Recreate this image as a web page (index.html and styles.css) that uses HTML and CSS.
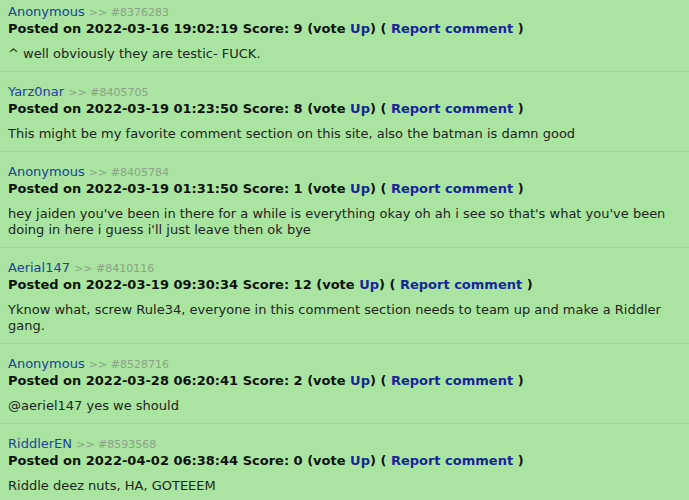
FILE: index.html
```html
<!DOCTYPE html>
<html lang="en">
<head>
    <meta charset="UTF-8">
    <title>Comments</title>
    <link rel="stylesheet" href="styles.css">
</head>
<body>
    <div class="comments">
        <div class="comment">
            <div class="author"><a href="#">Anonymous</a> <span class="cid">&gt;&gt; #8376283</span></div>
            <div class="meta">Posted on 2022-03-16 19:02:19 Score: 9 (vote <a href="#">Up</a>) ( <a href="#">Report comment</a> )</div>
            <p class="body">^ well obviously they are testic- FUCK.</p>
        </div>
        <div class="comment">
            <div class="author"><a href="#">Yarz0nar</a> <span class="cid">&gt;&gt; #8405705</span></div>
            <div class="meta">Posted on 2022-03-19 01:23:50 Score: 8 (vote <a href="#">Up</a>) ( <a href="#">Report comment</a> )</div>
            <p class="body">This might be my favorite comment section on this site, also the batman is damn good</p>
        </div>
        <div class="comment">
            <div class="author"><a href="#">Anonymous</a> <span class="cid">&gt;&gt; #8405784</span></div>
            <div class="meta">Posted on 2022-03-19 01:31:50 Score: 1 (vote <a href="#">Up</a>) ( <a href="#">Report comment</a> )</div>
            <p class="body">hey jaiden you've been in there for a while is everything okay oh ah i see so that's what you've been doing in here i guess i'll just leave then ok bye</p>
        </div>
        <div class="comment">
            <div class="author"><a href="#">Aerial147</a> <span class="cid">&gt;&gt; #8410116</span></div>
            <div class="meta">Posted on 2022-03-19 09:30:34 Score: 12 (vote <a href="#">Up</a>) ( <a href="#">Report comment</a> )</div>
            <p class="body">Yknow what, screw Rule34, everyone in this comment section needs to team up and make a Riddler gang.</p>
        </div>
        <div class="comment">
            <div class="author"><a href="#">Anonymous</a> <span class="cid">&gt;&gt; #8528716</span></div>
            <div class="meta">Posted on 2022-03-28 06:20:41 Score: 2 (vote <a href="#">Up</a>) ( <a href="#">Report comment</a> )</div>
            <p class="body">@aeriel147 yes we should</p>
        </div>
        <div class="comment">
            <div class="author"><a href="#">RiddlerEN</a> <span class="cid">&gt;&gt; #8593568</span></div>
            <div class="meta">Posted on 2022-04-02 06:38:44 Score: 0 (vote <a href="#">Up</a>) ( <a href="#">Report comment</a> )</div>
            <p class="body">Riddle deez nuts, HA, GOTEEEM</p>
        </div>
    </div>
</body>
</html>
```

FILE: styles.css
```css
body {
    margin: 0;
    background-color: #a9e5a0;
    color: #1f241e;
    font-family: 'DejaVu Sans', Verdana, sans-serif;
    font-size: 13px;
    line-height: 16px;
}

a {
    text-decoration: none;
}

.comment {
    padding: 12px 8px 9px 8px;
    border-bottom: 1px solid #9bd793;
}

.comment:first-child {
    padding-top: 4px;
}

.author a {
    color: #23409c;
}

.cid {
    color: #909e8c;
    font-size: 11px;
}

.meta {
    font-weight: bold;
    color: #111;
}

.meta a {
    color: #17259a;
}

.body {
    margin: 9px 0 0 0;
}
```
